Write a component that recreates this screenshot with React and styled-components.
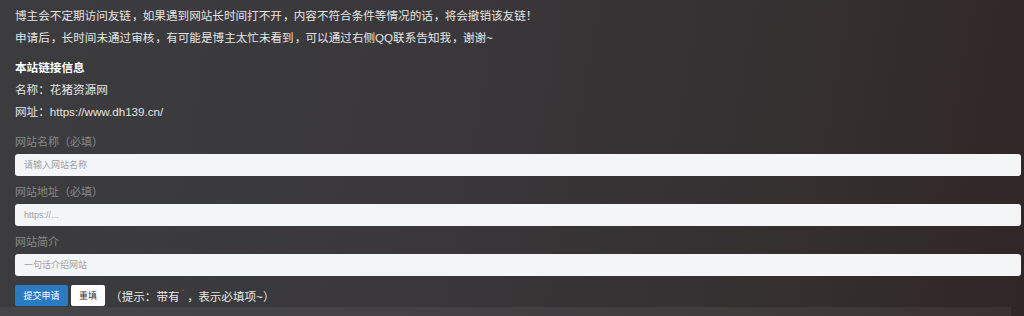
import React from "react";
import styled, { createGlobalStyle } from "styled-components";

const Global = createGlobalStyle`
  html, body { margin: 0; padding: 0; }
  body {
    width: 1024px;
    height: 316px;
    overflow: hidden;
    background: linear-gradient(100deg, #3c3c3f 0%, #39373a 45%, #342e2e 80%, #2f2726 100%);
    font-family: "Liberation Sans", "Noto Sans CJK SC", sans-serif;
  }
`;

const Page = styled.div`
  padding: 5px 3px 0 15px;
  display: flex;
  flex-direction: column;
`;

const Para = styled.p`
  margin: 0;
  font-size: 11.6px;
  line-height: 22px;
  color: #e4e4e4;
  font-weight: ${(p) => (p.$bold ? 700 : 400)};
  ${(p) => p.$bold && "color: #ffffff; margin-top: 8px;"}
`;

const Punct = styled.span`
  letter-spacing: -3.8px;
  padding-left: 1px;
  margin-right: 3px;
`;

const Form = styled.form`
  margin-top: 11px;
  display: flex;
  flex-direction: column;
`;

const Group = styled.div`
  display: flex;
  flex-direction: column;
  align-items: flex-start;
  gap: 4px;
  margin-bottom: 8px;
`;

const Label = styled.label`
  font-size: 11px;
  line-height: 16px;
  color: #898989;
`;

const Input = styled.input`
  box-sizing: border-box;
  height: 22px;
  width: 100%;
  border: none;
  border-radius: 3px;
  background: #f4f5f7;
  padding: 0 9px;
  font-size: 9px;
  font-family: "Liberation Sans", "Noto Sans CJK SC", sans-serif;
  color: #333;
  outline: none;
  &::placeholder { color: #a0a0a0; }
`;

const Actions = styled.div`
  display: flex;
  align-items: center;
  gap: 3px;
  margin-top: 1px;
  height: 21px;
`;

const Button = styled.button`
  box-sizing: border-box;
  height: 21px;
  border: none;
  border-radius: 2px;
  padding: 0 ${(p) => (p.$primary ? "8.5px" : "8px")};
  font-size: 9px;
  font-family: "Liberation Sans", "Noto Sans CJK SC", sans-serif;
  background: ${(p) => (p.$primary ? "#2b7bc3" : "#ffffff")};
  color: ${(p) => (p.$primary ? "#ffffff" : "#333333")};
`;

const Hint = styled.span`
  margin-left: 2px;
  font-size: 11.6px;
  color: #e8e8e8;
`;

const Star = styled.span`
  color: #c0392b;
  font-size: 7px;
  vertical-align: top;
  margin: 0 2px;
`;

const NextSection = styled.div`
  margin-top: 1px;
  margin-left: -15px;
  width: 1011px;
  height: 12px;
  background: rgba(255, 255, 255, 0.055);
`;

function fmt(text) {
  return text.split(/(，)/).map((part, i) =>
    part === "，" ? <Punct key={i}>，</Punct> : part
  );
}

export default function App() {
  return (
    <>
      <Global />
      <Page>
        <Para>{fmt("博主会不定期访问友链，如果遇到网站长时间打不开，内容不符合条件等情况的话，将会撤销该友链！")}</Para>
        <Para>{fmt("申请后，长时间未通过审核，有可能是博主太忙未看到，可以通过右侧QQ联系告知我，谢谢~")}</Para>
        <Para $bold>本站链接信息</Para>
        <Para>名称：花猪资源网</Para>
        <Para>网址：https://www.dh139.cn/</Para>
        <Form onSubmit={(e) => e.preventDefault()}>
          <Group>
            <Label>网站名称（必填）</Label>
            <Input placeholder="请输入网站名称" />
          </Group>
          <Group>
            <Label>网站地址（必填）</Label>
            <Input placeholder="https://..." />
          </Group>
          <Group>
            <Label>网站简介</Label>
            <Input placeholder="一句话介绍网站" />
          </Group>
          <Actions>
            <Button $primary type="submit">提交申请</Button>
            <Button type="reset">重填</Button>
            <Hint>（提示：带有<Star>*</Star>{fmt("，表示必填项~）")}</Hint>
          </Actions>
        </Form>
        <NextSection />
      </Page>
    </>
  );
}
